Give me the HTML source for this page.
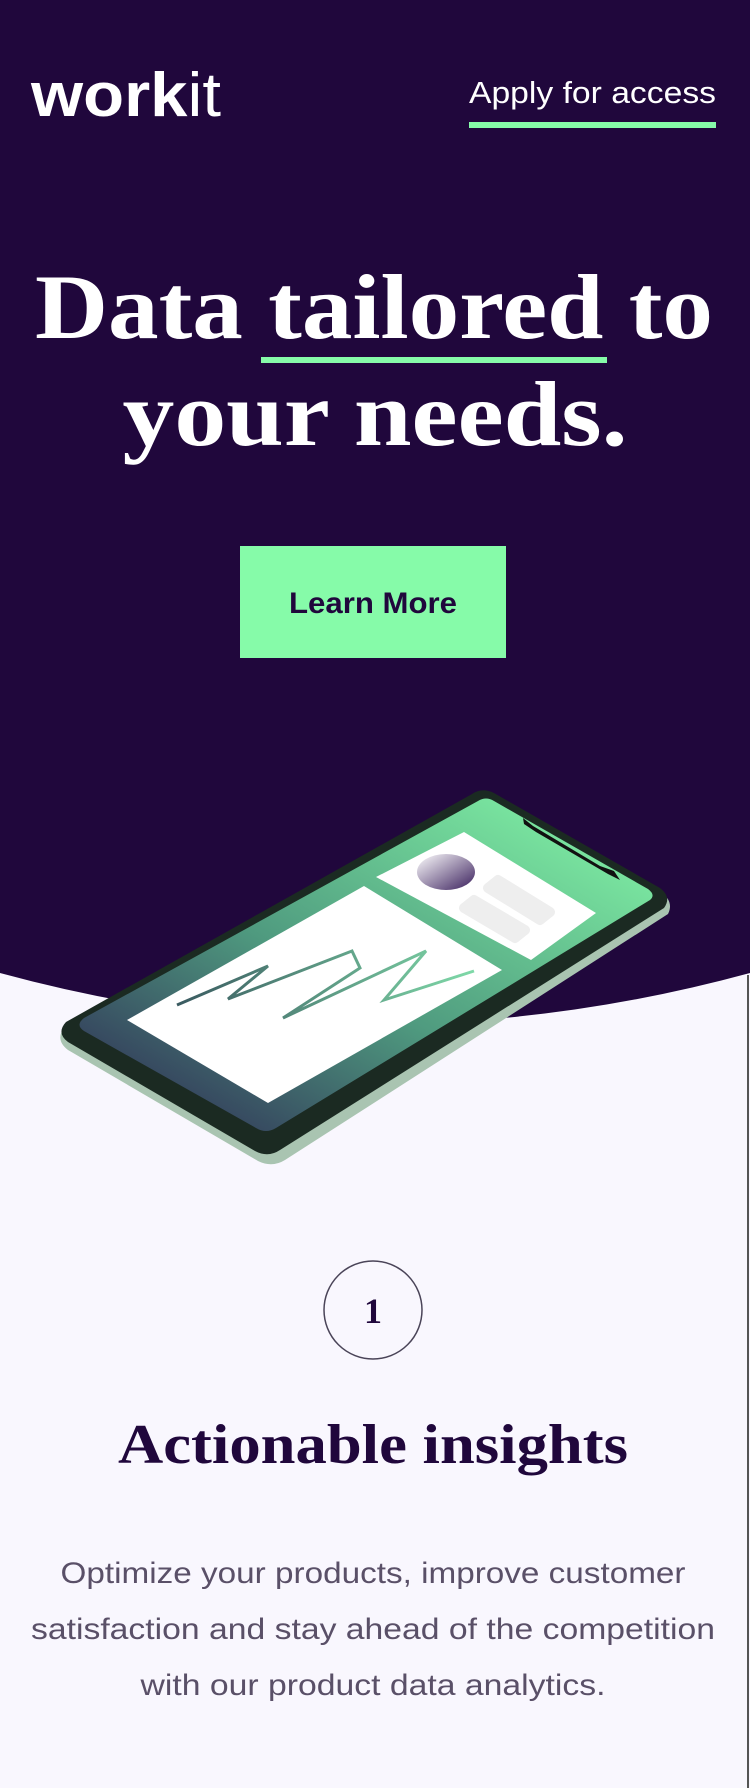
<!DOCTYPE html>
<html><head><meta charset="utf-8"><style>
html,body{margin:0;padding:0}
body{width:750px;height:1788px;position:relative;background:#f9f7fe;overflow:hidden;font-family:"Liberation Sans",sans-serif}
.abs{position:absolute}
</style></head><body>
<svg class="abs" style="left:0;top:0" width="750" height="1788" viewBox="0 0 750 1788">
<defs>
<linearGradient id="scr" x1="0" y1="1" x2="1" y2="0">
<stop offset="0" stop-color="#2a2050"/><stop offset="0.45" stop-color="#4f9a7f"/><stop offset="1" stop-color="#86fba9"/>
</linearGradient>
<linearGradient id="av" x1="0" y1="0" x2="1" y2="1">
<stop offset="0" stop-color="#fff"/><stop offset="1" stop-color="#3a1f5c"/>
</linearGradient>
<linearGradient id="zz" x1="0" y1="0" x2="1" y2="0">
<stop offset="0" stop-color="#3a5a60"/><stop offset="1" stop-color="#7fd9a8"/>
</linearGradient>
</defs>
<path d="M0,0 H750 V973 Q375,1075 0,973 Z" fill="#20073c"/>
<rect x="747" y="975" width="2" height="813" fill="#555"/>
<!-- phone body -->
<path d="M470,797 Q480,790 492,796 L662,893 Q674,902 668,914 L285,1160 Q272,1168 258,1161 L68,1050 Q55,1040 64,1028 Z" fill="#a9c4b1"/>
<path d="M472,794 Q482,787 494,793 L660,888 Q672,897 664,908 L280,1150 Q268,1158 255,1151 L68,1042 Q56,1033 66,1022 Z" fill="#1b2a22"/>
<!-- screen -->
<path d="M478,801 Q486,796 494,801 L648,889 Q656,895 650,900 L276,1128 Q266,1134 256,1128 L84,1031 Q75,1025 84,1018 Z" fill="url(#scr)"/>
<path d="M523,818 L533,826 L600,866 L614,871 L620,880 L608,874 L536,832 L524,824 Z" fill="#111"/>
<!-- cards -->
<path d="M364,886 L502,970 L268,1103 L127,1020 Z" fill="#fff"/>
<path d="M464,832 L596,913 L531,960 L376,877 Z" fill="#fff"/>
<ellipse cx="446" cy="872" rx="29" ry="18" fill="url(#av)"/>
<path d="M498,880 L550,912 L540,920 L488,888 Z" fill="#eee" stroke="#eee" stroke-width="10" stroke-linejoin="round"/>
<path d="M474,900 L525,930 L515,938 L464,908 Z" fill="#eee" stroke="#eee" stroke-width="10" stroke-linejoin="round"/>
<polyline points="177,1005 268,966 228,999 352,951 360,968 283,1018 426,951 384,1000 474,971" fill="none" stroke="url(#zz)" stroke-width="3" stroke-linejoin="miter"/>
<!-- headline -->
<text x="31" y="116" font-family="Liberation Sans" font-weight="bold" font-size="62" fill="#fff" textLength="190" lengthAdjust="spacingAndGlyphs">work<tspan font-weight="normal">it</tspan></text>
<text x="469" y="103" font-family="Liberation Sans" font-size="31" fill="#fff" textLength="247" lengthAdjust="spacingAndGlyphs">Apply for access</text>
<rect x="469" y="122" width="247" height="6" fill="#86fba9"/>
<text x="35" y="338" font-family="Liberation Serif" font-weight="bold" font-size="92" fill="#fff" textLength="678" lengthAdjust="spacingAndGlyphs">Data tailored to</text>
<rect x="261" y="357" width="346" height="6" fill="#86fba9"/>
<text x="375" y="445" text-anchor="middle" font-family="Liberation Serif" font-weight="bold" font-size="92" fill="#fff" textLength="505" lengthAdjust="spacingAndGlyphs">your needs.</text>
<rect x="240" y="546" width="266" height="112" fill="#86fba9"/>
<text x="373" y="613" text-anchor="middle" font-family="Liberation Sans" font-weight="bold" font-size="30" fill="#20073c" textLength="168" lengthAdjust="spacingAndGlyphs">Learn More</text>
<!-- lower -->
<circle cx="373" cy="1310" r="49" fill="none" stroke="#4a4458" stroke-width="1.5"/>
<text x="373" y="1323" text-anchor="middle" font-family="Liberation Serif" font-weight="bold" font-size="36" fill="#20073c">1</text>
<text x="373" y="1463" text-anchor="middle" font-family="Liberation Serif" font-weight="bold" font-size="56" fill="#20073c" textLength="510" lengthAdjust="spacingAndGlyphs">Actionable insights</text>
<g font-family="Liberation Sans" font-size="30" fill="#5a5068" text-anchor="middle">
<text x="373" y="1583" textLength="625" lengthAdjust="spacingAndGlyphs">Optimize your products, improve customer</text>
<text x="373" y="1639" textLength="684" lengthAdjust="spacingAndGlyphs">satisfaction and stay ahead of the competition</text>
<text x="373" y="1695" textLength="465" lengthAdjust="spacingAndGlyphs">with our product data analytics.</text>
</g>
</svg>
</body></html>
